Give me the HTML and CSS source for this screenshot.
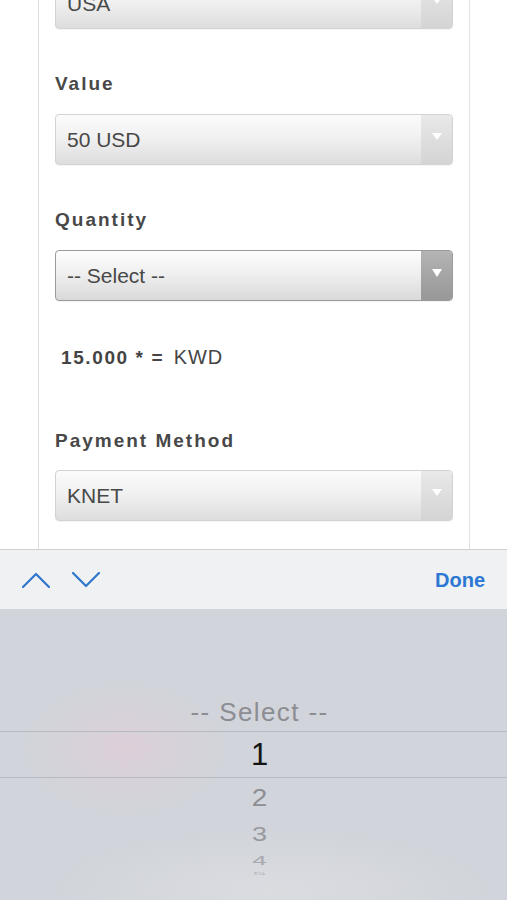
FILE: index.html
```html
<!DOCTYPE html>
<html>
<head>
<meta charset="utf-8">
<link rel="stylesheet" href="styles.css">
</head>
<body>
<div class="screen">
  <div class="content">
    <div class="card">
      <div class="select first"><span class="val">USA</span><span class="arrow"><i class="tri"></i></span></div>
      <div class="label">Value</div>
      <div class="select"><span class="val">50 USD</span><span class="arrow"><i class="tri"></i></span></div>
      <div class="label">Quantity</div>
      <div class="select focus"><span class="val">-- Select --</span><span class="arrow"><i class="tri"></i></span></div>
      <div class="price"><b>15.000 * =</b> <span class="cur">KWD</span></div>
      <div class="label pay">Payment Method</div>
      <div class="select"><span class="val">KNET</span><span class="arrow"><i class="tri"></i></span></div>
    </div>
  </div>
  <div class="toolbar">
    <div class="navs">
      <svg class="chev" width="28" height="16" viewBox="0 0 28 16"><polyline points="1,15 14,2 27,15" fill="none" stroke="#2f76cc" stroke-width="2.2" stroke-linecap="round" stroke-linejoin="round"/></svg>
      <svg class="chev" width="28" height="16" viewBox="0 0 28 16"><polyline points="1,1 14,14 27,1" fill="none" stroke="#2f76cc" stroke-width="2.2" stroke-linecap="round" stroke-linejoin="round"/></svg>
    </div>
    <div class="done">Done</div>
  </div>
  <div class="picker">
    <div class="row r-sel"><span>-- Select --</span></div>
    <div class="band"><span>1</span></div>
    <div class="row r2"><span>2</span></div>
    <div class="row r3"><span>3</span></div>
    <div class="row r4"><span>4</span></div>
    <div class="row r5"><span>5</span></div>
  </div>
</div>
</body>
</html>
```

FILE: styles.css
```css
html, body {
  margin: 0;
  padding: 0;
  background: #ffffff;
}
body {
  font-family: "Liberation Sans", Arial, sans-serif;
  width: 507px;
  height: 900px;
  overflow: hidden;
}
.screen {
  display: flex;
  flex-direction: column;
  height: 900px;
}
.content {
  height: 549px;
  overflow: hidden;
  flex: none;
}
.card {
  margin-left: 38px;
  width: 432px;
  height: 549px;
  box-sizing: border-box;
  border-left: 1px solid #dedede;
  border-right: 1px solid #e2e2e2;
  padding: 0 16px;
  display: flex;
  flex-direction: column;
}
.select {
  flex: none;
  height: 51px;
  box-sizing: border-box;
  border: 1px solid #d3d3d3;
  border-radius: 4px;
  background: linear-gradient(to bottom, #fbfbfb 0%, #f1f1f1 45%, #dddddd 100%);
  display: flex;
  overflow: hidden;
  box-shadow: 0 1px 1px rgba(0,0,0,0.05);
}
.select.first {
  margin-top: -22px;
}
.select .val {
  flex: 1;
  display: flex;
  align-items: center;
  padding-left: 11px;
  font-size: 21px;
  color: #484848;
}
.select .arrow {
  width: 31px;
  flex: none;
  display: flex;
  justify-content: center;
  align-items: flex-start;
  padding-top: 18px;
  box-sizing: border-box;
  background: linear-gradient(to bottom, #e9e9e9 0%, #dedede 50%, #d4d4d4 100%);
}
.tri {
  display: block;
  width: 0;
  height: 0;
  border-left: 5px solid transparent;
  border-right: 5px solid transparent;
  border-top: 7px solid #ffffff;
}
.select.focus {
  border-color: #9b9b9b;
  background: linear-gradient(to bottom, #fdfdfd 0%, #f0f0f0 45%, #d9d9d9 100%);
}
.select.focus .arrow {
  background: linear-gradient(to bottom, #b4b4b4 0%, #a5a5a5 50%, #989898 100%);
}
.select.focus .tri {
  border-top-width: 8px;
}
.label {
  margin-top: 44px;
  margin-bottom: 19px;
  height: 22px;
  line-height: 22px;
  font-size: 19px;
  font-weight: bold;
  letter-spacing: 2px;
  color: #484848;
}
.label.pay {
  margin-top: 62px;
  margin-bottom: 18px;
}
.price {
  margin-top: 45px;
  padding-left: 6px;
  height: 22px;
  line-height: 22px;
  font-size: 19px;
  color: #444;
  letter-spacing: 1.2px;
}
.price b {
  letter-spacing: 1.6px;
}
.price .cur {
  font-size: 20px;
  letter-spacing: 1px;
  margin-left: 3px;
}
.toolbar {
  flex: none;
  height: 60px;
  box-sizing: border-box;
  border-top: 1px solid #cfd0d4;
  background: #f0f1f3;
  display: flex;
  align-items: center;
  justify-content: space-between;
  padding: 0 22px 0 22px;
}
.navs {
  display: flex;
  gap: 22px;
  align-items: center;
}
.chev {
  display: block;
}
.done {
  font-size: 20px;
  font-weight: bold;
  color: #2b78d4;
  padding-top: 2px;
}
.picker {
  flex: 1;
  background:
    radial-gradient(ellipse 100px 65px at 125px 140px, rgba(226, 204, 216, 0.65), rgba(226, 204, 216, 0) 100%),
    radial-gradient(ellipse 220px 60px at 270px 280px, rgba(220, 222, 226, 0.8), rgba(220, 222, 226, 0) 100%),
    #d1d4da;
  padding-top: 85px;
  padding-left: 12px;
  display: flex;
  flex-direction: column;
  overflow: hidden;
}
.row, .band {
  flex: none;
  display: flex;
  justify-content: center;
  align-items: center;
  color: #8d8e93;
}
.band {
  margin-left: -12px;
  padding-left: 12px;
}
.row span, .band span {
  display: block;
}
.r-sel {
  height: 37px;
  font-size: 26px;
  letter-spacing: 1.4px;
  color: #8c8d92;
}
.band {
  height: 47px;
  box-sizing: border-box;
  border-top: 1px solid #b8bbc1;
  border-bottom: 1px solid #b8bbc1;
  font-size: 31px;
  color: #141414;
}
.r2 {
  height: 40px;
  font-size: 28px;
}
.r2 span {
  transform: scaleY(0.86);
}
.r3 {
  height: 32px;
  font-size: 27px;
  color: #98999e;
}
.r3 span {
  transform: scaleY(0.76);
}
.r4 {
  height: 20px;
  font-size: 26px;
  color: #a8a9ae;
}
.r4 span {
  transform: scaleY(0.5);
}
.r5 {
  height: 8px;
  font-size: 24px;
  color: #b4b5ba;
  overflow: hidden;
}
.r5 span {
  transform: scaleY(0.15);
}
```
